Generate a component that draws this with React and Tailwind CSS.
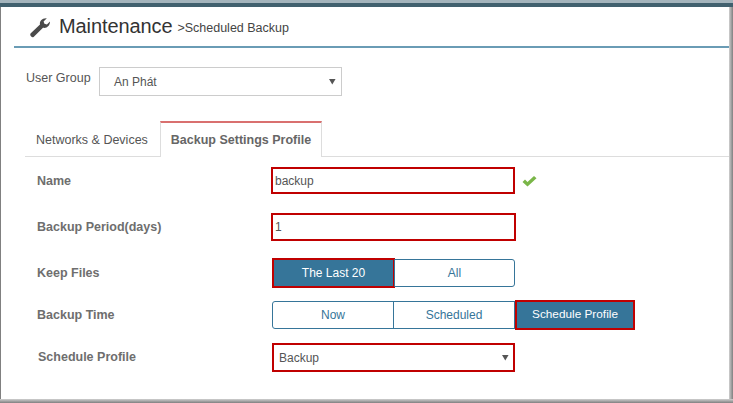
import React from 'react'

function Arrow() {
  return (
    <svg width="7" height="7" viewBox="0 0 8 8" className="shrink-0">
      <path d="M0 1h7.5L3.75 7.5z" fill="#555" />
    </svg>
  )
}

function Label({children, className = ""}) {
  return <div className={`w-[270px] shrink-0 pl-[36px] text-[12.5px] font-bold text-[#6e6e6e] ${className}`}>{children}</div>
}

function App() {
  return (
    <div className="w-[733px] h-[403px] overflow-hidden bg-white flex flex-col font-['Liberation_Sans',Arial,sans-serif] text-[#555]">
      <div className="h-[3px] bg-[#a4b4bc] shrink-0"></div>
      <div className="h-[4px] bg-[#41606e] shrink-0"></div>
      <div className="flex-1 flex min-h-0">
        <div className="w-px bg-[#808080] shrink-0"></div>
        <div className="flex-1 min-w-0">
          <div className="ml-[13px] h-[41px] border-b-2 border-[#6a9cb5] flex items-center">
            <svg width="22" height="22" viewBox="0 0 22 22" className="ml-[15px] shrink-0">
              <path d="M1.5 17.5 11 8.6C10.3 5.4 12.8 2 17.8 2.3L14.6 5.4 15.4 7.8 17.9 8.4 21 5.6C21 10 17.8 12.6 14 11.8L4.6 20.9C3.8 21.6 3 21.4 2.2 20.6 1.2 19.6 1 18.2 1.5 17.5Z" fill="#4a4a4a" />
            </svg>
            <span className="ml-[8px] mb-[1px] text-[20px] text-[#333] tracking-[-0.1px]">Maintenance</span>
            <span className="ml-[5px] mt-[3px] text-[12.5px] text-[#444]">&gt;Scheduled Backup</span>
          </div>

          <div className="flex items-start mt-[19px] ml-[24px]">
            <div className="w-[74px] pl-px text-[12.5px] mt-[2px] whitespace-nowrap">User Group</div>
            <div className="w-[243px] h-[29px] border border-[#ccc] flex items-center justify-between pl-[14px] pr-[5px] text-[12px]">
              <span>An Phát</span>
              <Arrow />
            </div>
          </div>

          <div className="flex ml-[24px] mt-[25px] h-[36px] border-b border-[#ddd]">
            <div className="w-[135px] pl-[11px] pt-[10px] text-[12.5px] whitespace-nowrap">Networks &amp; Devices</div>
            <div className="w-[162px] h-[36px] border-x border-t-2 border-x-[#ddd] border-t-[#d9706f] bg-white text-center pt-[8px] text-[12.5px] font-bold text-[#666] whitespace-nowrap">Backup Settings Profile</div>
          </div>

          <div className="flex items-center h-[27px] mt-[10px]">
            <Label className="mt-px">Name</Label>
            <div className="w-[244px] h-[27px] border-2 border-[#c00000] pl-[2px] flex items-center text-[12px]">backup</div>
            <svg width="15" height="12" viewBox="0 0 15 12" className="ml-[7px]">
              <path d="M0.5 7 3 4.5 5.5 7 12 1 14.5 3.3 5.5 11.5Z" fill="#7ab648" />
            </svg>
          </div>

          <div className="flex items-center h-[28px] mt-[19px]">
            <Label>Backup Period(days)</Label>
            <div className="w-[245px] h-[28px] border-2 border-[#c00000] pl-[2px] flex items-center text-[12px]">1</div>
          </div>

          <div className="flex items-center h-[30px] mt-[17px]">
            <Label>Keep Files</Label>
            <div className="flex items-center ml-px">
              <div className="w-[123px] h-[30px] border-2 border-[#c00000] bg-[#367599] text-white flex items-center justify-center text-[12px]">The Last 20</div>
              <div className="w-[121px] h-[28px] -ml-px border border-[#367599] rounded-r-[3px] text-[#367599] flex items-center justify-center text-[12px]">All</div>
            </div>
          </div>

          <div className="flex items-center h-[30px] mt-[12px]">
            <Label>Backup Time</Label>
            <div className="flex items-center ml-px">
              <div className="w-[122px] h-[28px] border border-[#367599] rounded-l-[3px] text-[#367599] flex items-center justify-center text-[12px]">Now</div>
              <div className="w-[122px] h-[28px] -ml-px border border-[#367599] text-[#367599] flex items-center justify-center text-[12px]">Scheduled</div>
              <div className="w-[120px] h-[30px] border-2 border-[#c00000] bg-[#367599] text-white flex items-center justify-center text-[11.8px]">Schedule Profile</div>
            </div>
          </div>

          <div className="flex items-center h-[29px] mt-[13px]">
            <Label className="pl-[37px]">Schedule Profile</Label>
            <div className="ml-px w-[243px] h-[29px] border-2 border-[#c00000] flex items-center justify-between pl-[5px] pr-[4px] text-[12px]">
              <span>Backup</span>
              <Arrow />
            </div>
          </div>
        </div>
        <div className="w-[4px] shrink-0 bg-gradient-to-r from-[#d0d0d0] to-[#808080]"></div>
      </div>
      <div className="h-[4px] shrink-0 bg-gradient-to-b from-[#d0d0d0] to-[#808080]"></div>
    </div>
  )
}

export default App
